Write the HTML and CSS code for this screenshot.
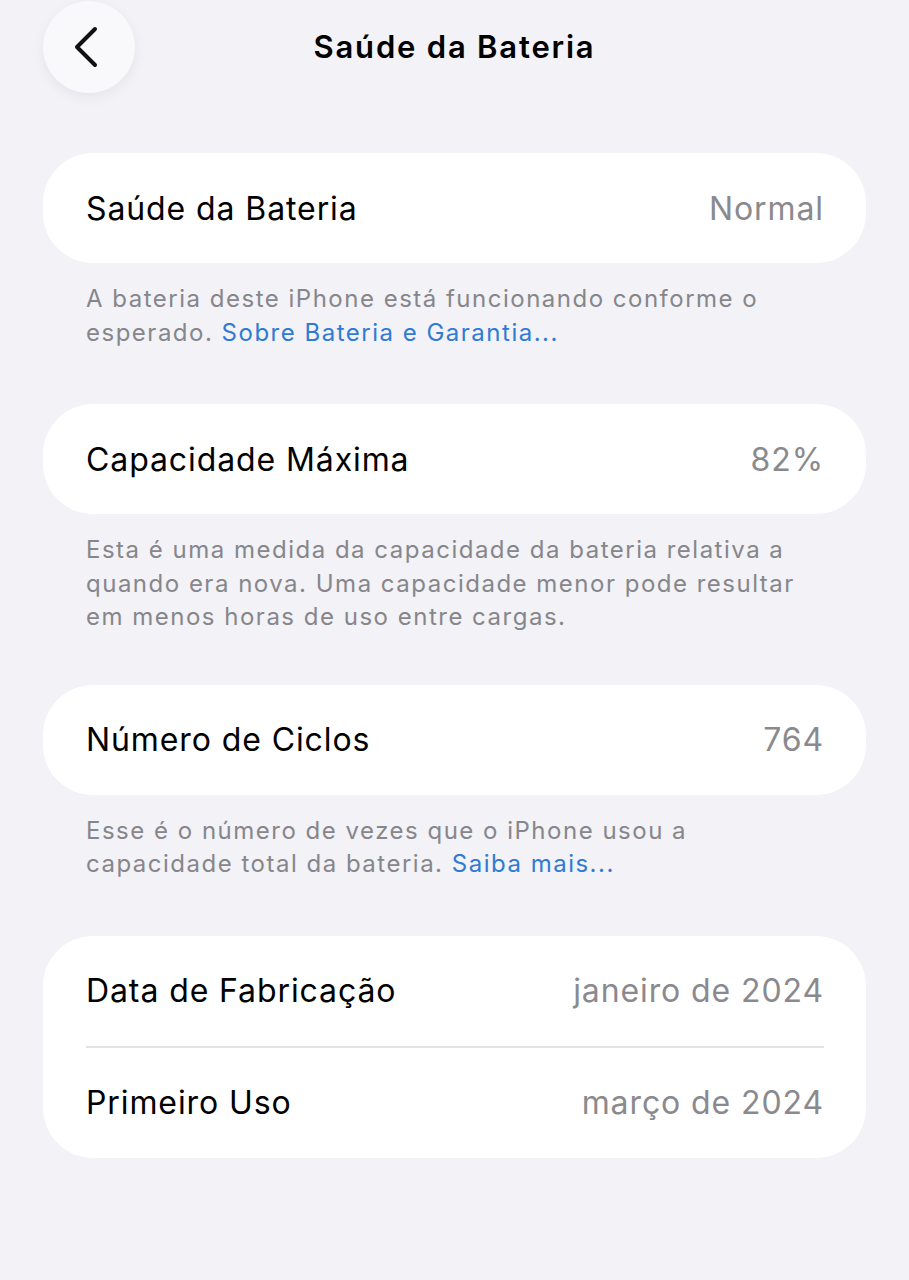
FILE: index.html
```
<!DOCTYPE html>
<html lang="pt-BR">
<head>
<meta charset="utf-8">
<title>Saúde da Bateria</title>
<link rel="stylesheet" href="styles.css">
</head>
<body>
<div class="page">
  <header class="nav">
    <button class="back" aria-label="Voltar">
      <svg width="30" height="46" viewBox="0 0 30 46"><path d="M23 5 L5 23 L23 41" fill="none" stroke="#111" stroke-width="4" stroke-linecap="round" stroke-linejoin="round"/></svg>
    </button>
    <h1 class="title">Saúde da Bateria</h1>
  </header>

  <section class="group">
    <div class="card">
      <div class="row"><span class="label">Saúde da Bateria</span><span class="value">Normal</span></div>
    </div>
    <p class="footer">A bateria deste iPhone está funcionando conforme o esperado. <span class="link">Sobre Bateria e Garantia...</span></p>
  </section>

  <section class="group">
    <div class="card">
      <div class="row"><span class="label">Capacidade Máxima</span><span class="value">82%</span></div>
    </div>
    <p class="footer footer-tight">Esta é uma medida da capacidade da bateria relativa a quando era nova. Uma capacidade menor pode resultar em menos horas de uso entre cargas.</p>
  </section>

  <section class="group">
    <div class="card">
      <div class="row"><span class="label">Número de Ciclos</span><span class="value">764</span></div>
    </div>
    <p class="footer">Esse é o número de vezes que o iPhone usou a capacidade total da bateria. <span class="link">Saiba mais...</span></p>
  </section>

  <section class="group">
    <div class="card">
      <div class="row"><span class="label">Data de Fabricação</span><span class="value">janeiro de 2024</span></div>
      <div class="sep"></div>
      <div class="row"><span class="label">Primeiro Uso</span><span class="value">março de 2024</span></div>
    </div>
  </section>
</div>
</body>
</html>
```
FILE: styles.css
```
html, body {
  margin: 0;
  padding: 0;
  background: #f2f2f7;
}
body {
  font-family: Inter, "Noto Sans", sans-serif;
  color: #000;
}
.page {
  padding: 0 43px 0 43px;
}
.nav {
  position: relative;
  height: 153px;
  display: flex;
  justify-content: center;
}
.back {
  position: absolute;
  left: 0;
  top: 1px;
  width: 92px;
  height: 92px;
  border-radius: 50%;
  border: none;
  background: #f9f9fb;
  box-shadow: 0 4px 14px rgba(0,0,0,0.06);
  display: flex;
  align-items: center;
  justify-content: center;
  padding: 0 4px 0 0;
}
.title {
  margin: 0;
  height: 94px;
  line-height: 94px;
  font-size: 31px;
  font-weight: 600;
  letter-spacing: 1.8px;
}
.card {
  background: #fff;
  border-radius: 50px;
  padding: 0 42px 0 43px;
}
.row {
  height: 110px;
  display: flex;
  align-items: center;
  justify-content: space-between;
  font-size: 32px;
  letter-spacing: 0.9px;
}
.value {
  color: #8a8a8e;
}
.sep {
  height: 2px;
  background: #e3e3e6;
}
.footer {
  margin: 0;
  padding: 19px 43px 55px 43px;
  font-size: 24px;
  line-height: 33.5px;
  color: #86868b;
  letter-spacing: 1.5px;
}
.footer-tight {
  padding-bottom: 51px;
}
.link {
  color: #2f7bd4;
}
```
